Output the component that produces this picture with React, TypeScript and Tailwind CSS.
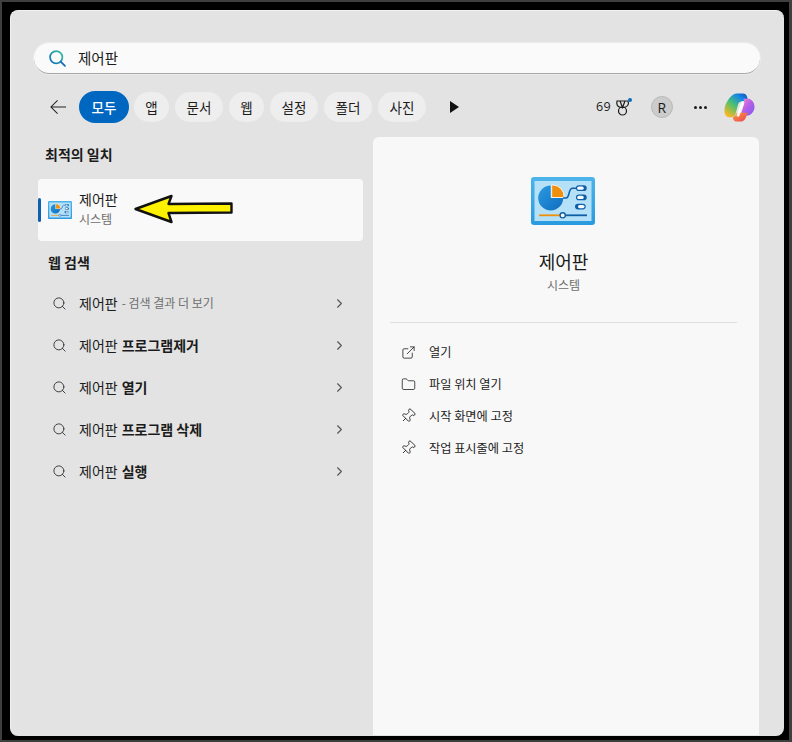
import type { ReactNode } from 'react'
import { ChevronRight, ExternalLink, Folder, Pin, Search } from 'lucide-react'

const font = { fontFamily: '"Noto Sans CJK KR", "Liberation Sans", sans-serif' }
const latin = { fontFamily: '"Open Sans", sans-serif' }

const tabs = [
  { label: '앱', w: 'w-[35px]' },
  { label: '문서', w: 'w-[48px]' },
  { label: '웹', w: 'w-[35px]' },
  { label: '설정', w: 'w-[48px]' },
  { label: '폴더', w: 'w-[48px]' },
  { label: '사진', w: 'w-[48px]' },
]

const webRows = [
  { bold: '', rest: '- 검색 결과 더 보기' },
  { bold: '프로그램제거', rest: '' },
  { bold: '열기', rest: '' },
  { bold: '프로그램 삭제', rest: '' },
  { bold: '실행', rest: '' },
]

function ControlPanelIcon({ className, id }: { className: string; id: string }) {
  return (
    <svg viewBox="0 0 64 48" className={className}>
      <defs>
        <linearGradient id={`${id}Frame`} x1="0" y1="0" x2="0" y2="1">
          <stop offset="0" stopColor="#4db4ea" />
          <stop offset="1" stopColor="#2a9ae0" />
        </linearGradient>
        <linearGradient id={`${id}Pie`} x1="0" y1="0" x2="1" y2="1">
          <stop offset="0" stopColor="#2b9be3" />
          <stop offset="1" stopColor="#0f6cbd" />
        </linearGradient>
      </defs>
      <rect width="64" height="48" rx="3" fill={`url(#${id}Frame)`} />
      <rect x="3.500" y="4" width="57" height="40" fill="#b5e1f8" />
      <path d="M19.700 8.500 V21 H32.200 A12.500 12.500 0 1 1 19.700 8.500Z" fill={`url(#${id}Pie)`} />
      <path d="M20.700 8 H21.500 A11.500 11.500 0 0 1 33 20.500 H20.700Z" fill="#ef8f0c" stroke="#fff" strokeWidth="0.8" />
      <path d="M32 21 H35 C39 21 37 11.200 41.500 11.200 H46" fill="none" stroke="#0f5ea8" strokeWidth="1.600" />
      <rect x="45" y="8.300" width="10.700" height="5.700" rx="2.800" fill="#0f5ea8" />
      <rect x="46.200" y="9.500" width="6.500" height="3.300" rx="1.600" fill="#fff" />
      <rect x="45" y="17.500" width="10.700" height="5.700" rx="2.800" fill="#0f5ea8" />
      <rect x="46.200" y="18.700" width="6.500" height="3.300" rx="1.600" fill="#fff" />
      <rect x="44" y="26.700" width="10.700" height="5.700" rx="2.800" fill="#0f5ea8" />
      <rect x="47" y="27.900" width="6.500" height="3.300" rx="1.600" fill="#fff" />
      <path d="M8 38.300 H32" stroke="#ef8f0c" strokeWidth="1.800" />
      <path d="M32 38.300 H56" stroke="#0f5ea8" strokeWidth="1.800" />
      <circle cx="31.700" cy="38.300" r="2.600" fill="#fff" stroke="#0f5ea8" strokeWidth="1.400" />
    </svg>
  )
}

function CopilotIcon() {
  return (
    <svg viewBox="0 0 32 30" className="w-[31px] h-[29px]">
      <defs>
        <linearGradient id="coA" x1="0.100" y1="0.900" x2="0.800" y2="0">
          <stop offset="0" stopColor="#f8b81f" />
          <stop offset="0.45" stopColor="#49c072" />
          <stop offset="0.800" stopColor="#1689e4" />
          <stop offset="1" stopColor="#1460c8" />
        </linearGradient>
        <linearGradient id="coB" x1="0" y1="0" x2="1" y2="1">
          <stop offset="0" stopColor="#f08ad0" />
          <stop offset="0.500" stopColor="#b45ee8" />
          <stop offset="1" stopColor="#7a5cf0" />
        </linearGradient>
        <linearGradient id="coC" x1="0" y1="0" x2="1" y2="1">
          <stop offset="0" stopColor="#f7a13a" />
          <stop offset="1" stopColor="#ee3d5a" />
        </linearGradient>
      </defs>
      <path d="M13 0.500 H19.500 C22 0.500 23.500 2 24 4.500 L25 8.500 H19 C16.500 8.500 15 10 14.500 12 L12 21.500 C11.500 24 9.500 25 7 25 H5 C1.500 24.500 0 20.500 0.500 16.500 C1 11 7 0.500 13 0.500Z" fill="url(#coA)" />
      <path d="M20 6 H26 C30 7.500 32 11.500 31.500 15.500 C31 20 27 23.500 23.500 23.500 H17 L20.500 12 C21.200 9.500 21 7.500 20 6Z" fill="url(#coB)" />
      <path d="M9 25 C11.500 24.500 12.500 22.500 13 20.500 H24.500 L22.500 25.500 C21.500 28.500 19 29.500 16.500 29.500 H12.500 C10.500 29.500 9.500 27.500 9 25Z" fill="url(#coC)" />
      <path d="M19.500 10 L14.500 23" stroke="#fff" strokeWidth="3" strokeLinecap="round" opacity="0.92" />
    </svg>
  )
}

function RewardIcon() {
  return (
    <svg viewBox="0 0 16 18" className="w-[16px] h-[18px]" fill="none" stroke="#1c1c1c" strokeWidth="1.200">
      <path d="M1 3 H12 L12.500 5.500 C12 8 10 9.500 6.500 9.500 C3 9.500 1 8 0.800 5.500Z" />
      <path d="M4 3 L6.500 9.500 L9 3" />
      <circle cx="6.500" cy="13" r="4" />
      <circle cx="14" cy="2" r="2" fill="#0f6cbd" stroke="none" />
    </svg>
  )
}

function ActionRow({ icon, label }: { icon: ReactNode; label: string }) {
  return (
    <div className="h-[32px] flex items-center">
      <span className="w-[16px] flex justify-center text-[#222]">{icon}</span>
      <span className="ml-[13px] text-[12.200px] text-[#1b1b1b]">{label}</span>
    </div>
  )
}

export default function App() {
  return (
    <div
      style={font}
      className="relative w-[792px] h-[742px] overflow-hidden bg-black border-t-2 border-l-2 border-b-2 border-r-[3px] border-[#3f3f3f] pt-[8px] pl-[8px] pr-[5px] pb-[4px]"
    >
      <div className="h-full rounded-[8px] bg-[#e3e3e3] border-l border-t border-[#f2f2f2] pl-[23px] pr-[23px] pt-[32px] flex flex-col text-[#1b1b1b]">
        <div className="h-[31px] w-[726px] shrink-0 rounded-full bg-[#fafafa] border-b border-[#a8a8a8] shadow-[0_0_0_1px_#ececec] flex items-center pl-[15px]">
          <svg viewBox="0 0 16 16" className="w-[17px] h-[17px]" fill="none" strokeWidth="1.600">
            <defs>
              <linearGradient id="searchRing" x1="0" y1="1" x2="1" y2="0">
                <stop offset="0" stopColor="#0f6cbd" />
                <stop offset="1" stopColor="#35c1a3" />
              </linearGradient>
            </defs>
            <circle cx="6.800" cy="6.800" r="5.800" stroke="url(#searchRing)" />
            <path d="M11 11 L15 15" stroke="#0f6cbd" strokeLinecap="round" />
          </svg>
          <span className="ml-[12px] text-[14.500px] leading-none">제어판</span>
        </div>

        <div className="mt-[17px] h-[32px] shrink-0 flex items-center">
          <svg viewBox="0 0 18 16" className="ml-[16px] w-[17px] h-[16px]" fill="none" stroke="#222" strokeWidth="1.100">
            <path d="M17 8 H1 M8 1 L1 8 L8 15" />
          </svg>
          <div className="ml-[12px] w-[50px] h-[32px] rounded-full bg-[#0067c0] text-white text-[13.500px] font-medium flex items-center justify-center">
            모두
          </div>
          <div className="ml-[5px] flex gap-[6px]">
            {tabs.map((t) => (
              <div key={t.label} className={`${t.w} h-[30px] rounded-full bg-[#eeeeee] text-[13.500px] flex items-center justify-center`}>
                {t.label}
              </div>
            ))}
          </div>
          <svg viewBox="0 0 9 12" className="ml-[24px] w-[9px] h-[12px]">
            <path d="M0 0 L9 6 L0 12Z" fill="#111" />
          </svg>
          <span className="ml-[137px] text-[12.500px] font-normal tracking-[0.3px]" style={latin}>69</span>
          <div className="ml-[5px]">
            <RewardIcon />
          </div>
          <div className="ml-[19px] w-[22px] h-[22px] rounded-full bg-[#cccccc] border border-[#b8b8b8] text-[14px] flex items-center justify-center" style={latin}>
            R
          </div>
          <div className="ml-[21px] flex gap-[2px]">
            <span className="w-[3px] h-[3px] bg-[#1b1b1b] rounded-full" />
            <span className="w-[3px] h-[3px] bg-[#1b1b1b] rounded-full" />
            <span className="w-[3px] h-[3px] bg-[#1b1b1b] rounded-full" />
          </div>
          <div className="ml-[17px]">
            <CopilotIcon />
          </div>
        </div>

        <div className="mt-[14px] flex-1 flex min-h-0">
          <div className="ml-[4px] w-[325px] shrink-0 flex flex-col">
            <h2 className="ml-[7px] mt-[7px] h-[20px] text-[14px] leading-[20px] font-bold">최적의 일치</h2>
            <div className="relative mt-[15px] h-[62px] rounded-[4px] bg-[#f9f9f9] flex items-center">
              <span className="absolute left-0 top-[19px] w-[3px] h-[24px] rounded-full bg-[#0f5fb0]" />
              <ControlPanelIcon id="cpSmall" className="ml-[10px] w-[24px] h-[18px]" />
              <div className="ml-[7px] -mt-[4px] flex flex-col">
                <span className="text-[14px] leading-[20px]">제어판</span>
                <span className="mt-[1px] text-[12px] leading-[18px] text-[#6e6e6e]">시스템</span>
              </div>
            </div>
            <h2 className="ml-[10px] mt-[11px] h-[20px] text-[14px] leading-[20px] font-bold">웹 검색</h2>
            <div className="mt-[10px] flex flex-col">
              {webRows.map((r) => (
                <div key={r.bold + r.rest} className="h-[42px] flex items-center">
                  <Search size={15} strokeWidth={1.400} className="ml-[14px] text-[#2a2a2a]" />
                  <span className="ml-[12px] text-[14px]">제어판</span>
                  {r.bold && <span className="ml-[4px] text-[14px] font-bold">{r.bold}</span>}
                  {r.rest && <span className="ml-[4px] text-[12px] text-[#6e6e6e]">{r.rest}</span>}
                  <ChevronRight size={15} strokeWidth={1.800} className="ml-auto mr-[16px] text-[#555]" />
                </div>
              ))}
            </div>
          </div>

          <div className="ml-[10px] w-[386px] mb-[1px] pr-[5px] rounded-t-[6px] bg-[#f8f8f8] flex flex-col items-center">
            <ControlPanelIcon id="cpLarge" className="mt-[40px] mr-[2px] w-[64px] h-[48px]" />
            <div className="mt-[24px] text-[18px] leading-[24px]">제어판</div>
            <div className="mt-[3px] text-[12px] leading-[18px] text-[#6e6e6e]">시스템</div>
            <div className="mt-[28px] w-[347px] border-t border-[#e0e0e0] mr-[1px]" />
            <div className="mt-[13px] w-full pl-[27px] flex flex-col">
              <ActionRow icon={<ExternalLink size={15} strokeWidth={1.300} />} label="열기" />
              <ActionRow icon={<Folder size={15} strokeWidth={1.300} />} label="파일 위치 열기" />
              <ActionRow icon={<Pin size={16} strokeWidth={1.300} className="rotate-45" />} label="시작 화면에 고정" />
              <ActionRow icon={<Pin size={16} strokeWidth={1.300} className="rotate-45" />} label="작업 표시줄에 고정" />
            </div>
          </div>
        </div>
      </div>

      {/* annotation arrow lying over the best match card */}
      <svg viewBox="0 0 102 32" className="absolute left-[131px] top-[191px] w-[102px] h-[32px]">
        <path
          d="M2.500 16 L38.500 3 L35.500 11 L98.500 10.500 L98.500 19.500 L35.500 20 L38.500 29 Z"
          fill="#fff200"
          stroke="#111"
          strokeWidth="2.400"
          strokeLinejoin="round"
        />
      </svg>
    </div>
  )
}
